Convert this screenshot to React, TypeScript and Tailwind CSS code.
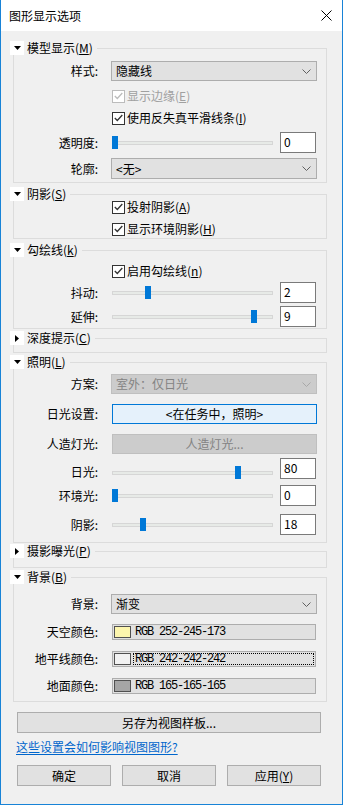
import React from 'react';

// Windows-style "图形显示选项" dialog

function Acc({ text, k }: { text: string; k: string }) {
  return (
    <>
      {text}(<span className="underline underline-offset-1">{k}</span>)
    </>
  );
}

function Tri({ open }: { open: boolean }) {
  return open ? (
    <svg width="7" height="4" viewBox="0 0 7 4">
      <polygon points="0,0 7,0 3.5,4" fill="#000" />
    </svg>
  ) : (
    <svg width="4" height="7" viewBox="0 0 4 7">
      <polygon points="0,0 4,3.5 0,7" fill="#000" />
    </svg>
  );
}

function Group({
  title,
  k,
  open = true,
  className = '',
  children,
}: {
  title: string;
  k: string;
  open?: boolean;
  className?: string;
  children?: React.ReactNode;
}) {
  return (
    <div className={`ml-[12px] w-[314px] border border-[#dcdcdc] ${className}`}>
      {/* header sits on the top border line */}
      <div className="-ml-[4px] -mt-[8px] -mb-[6px] flex h-[14px] items-center">
        <div className="flex h-[14px] w-[14px] items-center justify-center bg-white">
          <Tri open={open} />
        </div>
        <span className="bg-[#f0f0f0] pl-[3px] pr-[4px] text-[12px] leading-[14px]">
          <Acc text={title} k={k} />
        </span>
      </div>
      {children}
    </div>
  );
}

function Label({ children, className = '' }: { children: React.ReactNode; className?: string }) {
  return <div className={`w-[84px] shrink-0 text-right text-[12px] leading-[16px] ${className}`}>{children}</div>;
}

function Chevron({ color = '#606060' }: { color?: string }) {
  return (
    <svg width="9" height="5" viewBox="0 0 9 5">
      <polyline points="0.5,0.5 4.5,4.5 8.5,0.5" fill="none" stroke={color} strokeWidth="1" />
    </svg>
  );
}

function Select({ value, disabled = false }: { value: string; disabled?: boolean }) {
  return (
    <div
      className={`ml-[13px] flex h-full w-[206px] items-center justify-between border pl-[4px] pr-[5px] text-[12px] ${
        disabled ? 'border-[#bfbfbf] bg-[#cccccc] text-[#838383]' : 'border-[#adadad] bg-[#e1e1e1] text-black'
      }`}
    >
      <span>{value}</span>
      <Chevron color={disabled ? '#a8a8a8' : '#606060'} />
    </div>
  );
}

function Check({ label, disabled = false, className = '' }: { label: React.ReactNode; disabled?: boolean; className?: string }) {
  const c = disabled ? '#bcbcbc' : '#333333';
  return (
    <div className={`ml-[98px] flex h-[16px] items-center ${className}`}>
      <div
        className={`flex h-[13px] w-[13px] items-center justify-center border bg-white ${
          disabled ? 'border-[#bcbcbc]' : 'border-[#333333]'
        }`}
      >
        <svg width="9" height="8" viewBox="0 0 9 8">
          <polyline points="0.8,4 3.3,6.5 8.3,1" fill="none" stroke={c} strokeWidth="1.3" />
        </svg>
      </div>
      <span className={`ml-[2px] text-[12px] leading-[16px] ${disabled ? 'text-[#a0a0a0]' : 'text-black'}`}>{label}</span>
    </div>
  );
}

function Slider({ left }: { left: number }) {
  return (
    <div className="relative ml-[14px] flex h-[13px] w-[161px] items-center">
      <div className="h-[4px] w-full border border-[#d6d6d6] bg-[#e7eae7]" />
      <div className="absolute top-0 h-[13px] w-[6px] bg-[#0078d7]" style={{ left }} />
    </div>
  );
}

function NumBox({ value }: { value: string }) {
  return (
    <div className="ml-[7px] h-full w-[36px] border border-[#7a7a7a] bg-white pl-[3px] pt-[1px] text-[12px] leading-[16px]">
      {value}
    </div>
  );
}

function SliderRow({ label, left, value, className = '', low = false }: { label: string; left: number; value: string; className?: string; low?: boolean }) {
  return (
    <div className={`flex h-[21px] items-center ${className}`}>
      <Label className={low ? 'mt-[7px]' : ''}>{label}</Label>
      <div className={low ? 'mt-[8px]' : ''}>
        <Slider left={left} />
      </div>
      <NumBox value={value} />
    </div>
  );
}

function ColorRow({
  label,
  rgb,
  swatch,
  focused = false,
  className = '',
}: {
  label: string;
  rgb: string;
  swatch: string;
  focused?: boolean;
  className?: string;
}) {
  return (
    <div className={`flex h-[16px] items-center ${className}`}>
      <Label>{label}</Label>
      <div className="ml-[14px] flex h-full w-[204px] items-center border border-[#adadad] bg-[#e1e1e1] pl-[1px]">
        <div className="h-[12px] w-[17px] shrink-0 border border-[#505050]" style={{ backgroundColor: swatch }} />
        <span
          className={`ml-[2px] flex h-[12px] flex-1 items-center pl-[1px] font-['Liberation_Mono',monospace] text-[12px] tracking-[-1.2px] text-black ${
            focused ? 'mr-[1px] border border-dotted border-black' : 'border border-transparent'
          }`}
        >
          {rgb}
        </span>
      </div>
    </div>
  );
}

export default function App() {
  return (
    <div className="h-[805px] w-[343px] border-b border-l border-r border-[#1883d7] bg-[#f0f0f0] font-['Noto_Sans_CJK_SC',sans-serif] text-black">
      {/* Title bar */}
      <div className="flex h-[31px] items-center justify-between bg-white pl-[8px] pr-[10px]">
        <span className="text-[12px]">图形显示选项</span>
        <svg width="11" height="11" viewBox="0 0 11 11">
          <path d="M0.5 0.5 L10.5 10.5 M10.5 0.5 L0.5 10.5" stroke="#000" strokeWidth="1" />
        </svg>
      </div>

      {/* 模型显示 */}
      <Group title="模型显示" k="M" className="mt-[17px] pb-[3px]">
        <div className="mt-[12px] flex h-[20px] items-center">
          <Label>样式:</Label>
          <Select value="隐藏线" />
        </div>
        <Check className="mt-[7px]" disabled label={<Acc text="显示边缘" k="E" />} />
        <Check className="mt-[6px]" label={<Acc text="使用反失真平滑线条" k="I" />} />
        <SliderRow className="mt-[6px]" label="透明度:" left={0} value="0" />
        <div className="mt-[5px] flex h-[21px] items-center">
          <Label>轮廓:</Label>
          <Select value="<无>" />
        </div>
      </Group>

      {/* 阴影 */}
      <Group title="阴影" k="S" className="mt-[11px] pb-[1px]">
        <Check className="mt-[4px]" label={<Acc text="投射阴影" k="A" />} />
        <Check className="mt-[6px]" label={<Acc text="显示环境阴影" k="H" />} />
      </Group>

      {/* 勾绘线 */}
      <Group title="勾绘线" k="k" className="mt-[11px] pb-[1px]">
        <Check className="mt-[12px]" label={<Acc text="启用勾绘线" k="n" />} />
        <SliderRow className="mt-[3px]" label="抖动:" left={33} value="2" />
        <SliderRow className="mt-[3px]" label="延伸:" left={139} value="9" />
      </Group>

      {/* 深度提示 */}
      <Group title="深度提示" k="C" open={false} className="mt-[9px]">
        <div className="h-[13px]" />
      </Group>

      {/* 照明 */}
      <Group title="照明" k="L" className="mt-[9px] pb-[7px]">
        <div className="mt-[11px] flex h-[20px] items-center">
          <Label>方案:</Label>
          <Select value="室外：仅日光" disabled />
        </div>
        <div className="mt-[10px] flex h-[20px] items-center">
          <Label>日光设置:</Label>
          <div className="ml-[14px] flex h-full w-[205px] items-center justify-center border border-[#0078d7] bg-[#e5f1fb] text-[12px]">
            &lt;在任务中，照明&gt;
          </div>
        </div>
        <div className="mt-[10px] flex h-[20px] items-center">
          <Label>人造灯光:</Label>
          <div className="ml-[14px] flex h-full w-[205px] items-center justify-center border border-[#bfbfbf] bg-[#cccccc] text-[12px] text-[#838383]">
            人造灯光...
          </div>
        </div>
        <SliderRow className="mt-[4px]" label="日光:" left={123} value="80" low />
        <SliderRow className="mt-[6px]" label="环境光:" left={0} value="0" />
        <SliderRow className="mt-[8px]" label="阴影:" left={28} value="18" />
      </Group>

      {/* 摄影曝光 */}
      <Group title="摄影曝光" k="P" open={false} className="mt-[8px]">
        <div className="h-[15px]" />
      </Group>

      {/* 背景 */}
      <Group title="背景" k="B" className="mt-[9px] pb-[7px]">
        <div className="mt-[16px] flex h-[20px] items-center">
          <Label>背景:</Label>
          <Select value="渐变" />
        </div>
        <ColorRow className="mt-[10px]" label="天空颜色:" rgb="RGB 252-245-173" swatch="#fcf5ad" />
        <ColorRow className="mt-[11px]" label="地平线颜色:" rgb="RGB 242-242-242" swatch="#f2f2f2" focused />
        <ColorRow className="mt-[11px]" label="地面颜色:" rgb="RGB 165-165-165" swatch="#a5a5a5" />
      </Group>

      {/* Footer */}
      <div className="ml-[16px] mt-[10px] flex h-[21px] w-[304px] items-center justify-center border border-[#adadad] bg-[#e1e1e1] text-[12px]">
        另存为视图样板...
      </div>
      <div className="ml-[15px] mt-[6px] h-[16px] text-[12px] leading-[16px] text-[#0066cc] underline underline-offset-2">
        这些设置会如何影响视图图形?
      </div>
      <div className="ml-[16px] mt-[10px] flex w-[304px] gap-[11px]">
        {[<>确定</>, <>取消</>, <Acc text="应用" k="Y" />].map((l, i) => (
          <div
            key={i}
            className="flex h-[21px] w-[94px] items-center justify-center border border-[#adadad] bg-[#e1e1e1] text-[12px]"
          >
            {l}
          </div>
        ))}
      </div>
    </div>
  );
}
